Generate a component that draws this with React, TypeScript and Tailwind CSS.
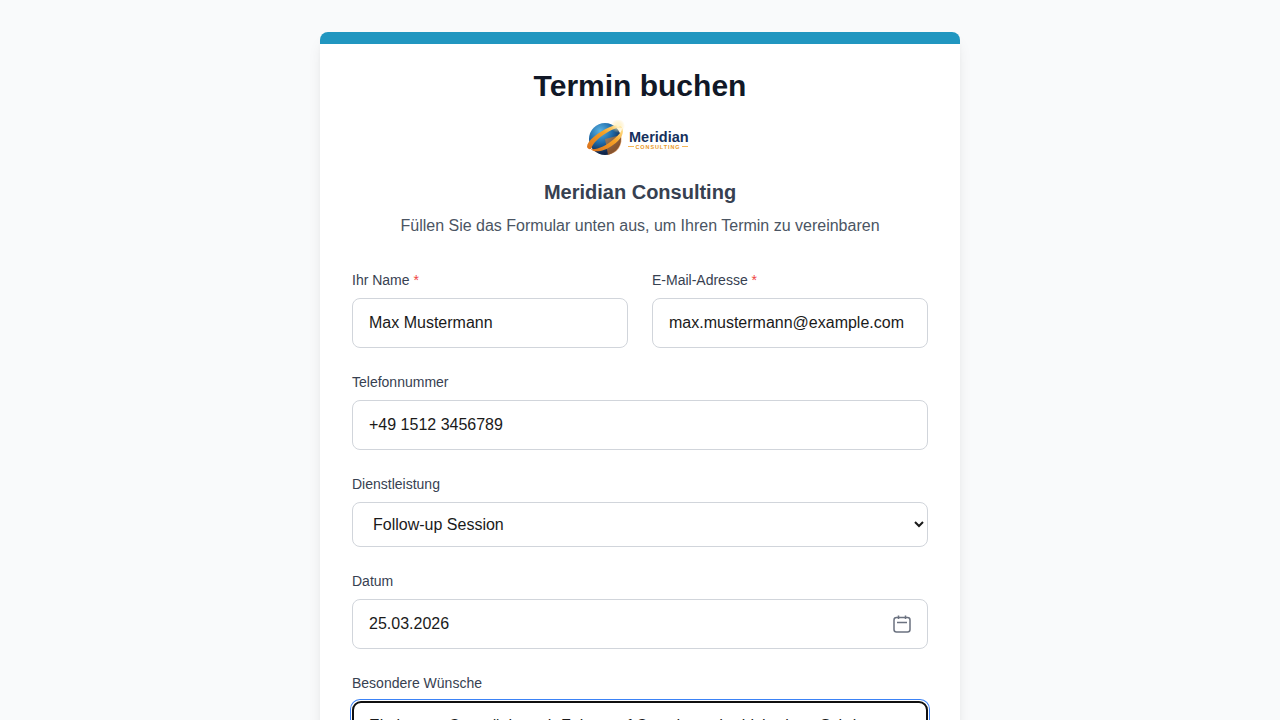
import { useEffect, useRef } from "react";

function Logo() {
  return (
    <svg width="108" height="36" viewBox="0 0 108 36" className="mx-auto block">
      <defs>
        <radialGradient id="globe" cx="35%" cy="25%" r="85%">
          <stop offset="0%" stopColor="#5bb4e4" />
          <stop offset="45%" stopColor="#1f6aa8" />
          <stop offset="80%" stopColor="#12294f" />
          <stop offset="100%" stopColor="#0c1c38" />
        </radialGradient>
        <linearGradient id="ring" x1="0" y1="1" x2="1" y2="0">
          <stop offset="0%" stopColor="#d9701c" />
          <stop offset="60%" stopColor="#f7a326" />
          <stop offset="100%" stopColor="#ffe79a" />
        </linearGradient>
        <radialGradient id="glow">
          <stop offset="0%" stopColor="#fff6d0" />
          <stop offset="100%" stopColor="#ffe08a" stopOpacity="0" />
        </radialGradient>
      </defs>
      <circle cx="19" cy="19" r="16" fill="url(#globe)" />
      <path d="M19 19 L35 15 A16 16 0 0 1 22 35 Z" fill="#d9761f" opacity="0.6" />
      <path
        d="M1 27 C1 21 12 12 24 7 C30 5 35 5 36 8 C32 7 27 9 22 12 C13 17 7 23 5 29 C3 29.5 1.5 28.5 1 27 Z"
        fill="url(#ring)"
      />
      <path d="M5 29 C11 30 20 26 28 19 C33 15 36 11 36 8 C39 12 35 20 27 25 C18 32 7 33 5 29 Z" fill="url(#ring)" />
      <circle cx="32" cy="6" r="7" fill="url(#glow)" />
      <text x="43" y="22" fontFamily="Liberation Sans, sans-serif" fontWeight="700" fontSize="14.5" fill="#15305c">
        Meridian
      </text>
      <path d="M42 26.5H48M96 26.5H102" stroke="#f0a22e" strokeWidth="0.8" />
      <text
        x="49.5"
        y="28.5"
        fontFamily="Liberation Sans, sans-serif"
        fontWeight="700"
        fontSize="5.5"
        letterSpacing="0.9"
        fill="#eb9a25"
      >
        CONSULTING
      </text>
    </svg>
  );
}

function CalendarIcon() {
  return (
    <svg
      width="20"
      height="20"
      viewBox="0 0 20 20"
      fill="none"
      stroke="#6b7280"
      strokeWidth="1.5"
      className="absolute top-[15px] right-4"
    >
      <rect x="2" y="3.5" width="16" height="14.5" rx="2.5" />
      <path d="M5 8.5H15M6.5 1.5V5M13.5 1.5V5" />
    </svg>
  );
}

const labelClass = "block mb-2 text-sm leading-5 text-[#374151]";
const inputClass =
  "block w-full rounded-lg border border-[#d1d5db] bg-white px-4 py-3 text-base text-[#1a1a1a] focus:ring-2 focus:ring-[#3b82f6]";

export default function App() {
  const notesRef = useRef<HTMLTextAreaElement>(null);

  // Card is taller than the window, keep the top in view
  useEffect(() => {
    notesRef.current?.focus({ preventScroll: true });
  }, []);

  return (
    <div className="min-h-screen bg-[#f9fafb] py-8 font-['Liberation_Sans',Arial,sans-serif]">
      <div className="mx-auto w-[640px] overflow-hidden rounded-lg bg-white shadow-lg">
        <div className="h-3 bg-[#2196c0]" />
        <div className="px-8 pt-6 pb-8">
          <h1 className="mb-4 text-center text-3xl leading-9 font-bold text-[#111827]">Termin buchen</h1>
          <Logo />
          <h2 className="mt-[22px] mb-2 text-center text-xl leading-7 font-semibold text-[#374151]">
            Meridian Consulting
          </h2>
          <p className="mb-8 text-center text-base leading-6 text-[#4b5563]">
            Füllen Sie das Formular unten aus, um Ihren Termin zu vereinbaren
          </p>
          <form>
            <div className="mb-6 grid grid-cols-2 gap-6">
              <div>
                <label className={labelClass}>
                  Ihr Name <span className="text-[#ef4444]">*</span>
                </label>
                <input className={inputClass} defaultValue="Max Mustermann" />
              </div>
              <div>
                <label className={labelClass}>
                  E-Mail-Adresse <span className="text-[#ef4444]">*</span>
                </label>
                <input className={inputClass} type="email" defaultValue="max.mustermann@example.com" />
              </div>
            </div>
            <div className="mb-6">
              <label className={labelClass}>Telefonnummer</label>
              <input className={inputClass} type="tel" defaultValue="+49 1512 3456789" />
            </div>
            <div className="mb-6">
              <label className={labelClass}>Dienstleistung</label>
              <select className={inputClass} defaultValue="Follow-up Session">
                <option>Erstgespräch</option>
                <option>Follow-up Session</option>
              </select>
            </div>
            <div className="mb-6">
              <label className={labelClass}>Datum</label>
              <div className="relative">
                <input className={inputClass} defaultValue="25.03.2026" />
                <CalendarIcon />
              </div>
            </div>
            <div className="mb-6">
              <label className={labelClass}>Besondere Wünsche</label>
              <textarea
                ref={notesRef}
                rows={4}
                className={inputClass}
                defaultValue="Ein kurzes Gespräch nach Fokus auf Grundsatz der bisherigen Schritte"
              />
            </div>
            <button type="button" className="w-full rounded-lg bg-[#2196c0] py-3 text-base font-semibold text-white">
              Termin buchen
            </button>
          </form>
        </div>
      </div>
    </div>
  );
}
